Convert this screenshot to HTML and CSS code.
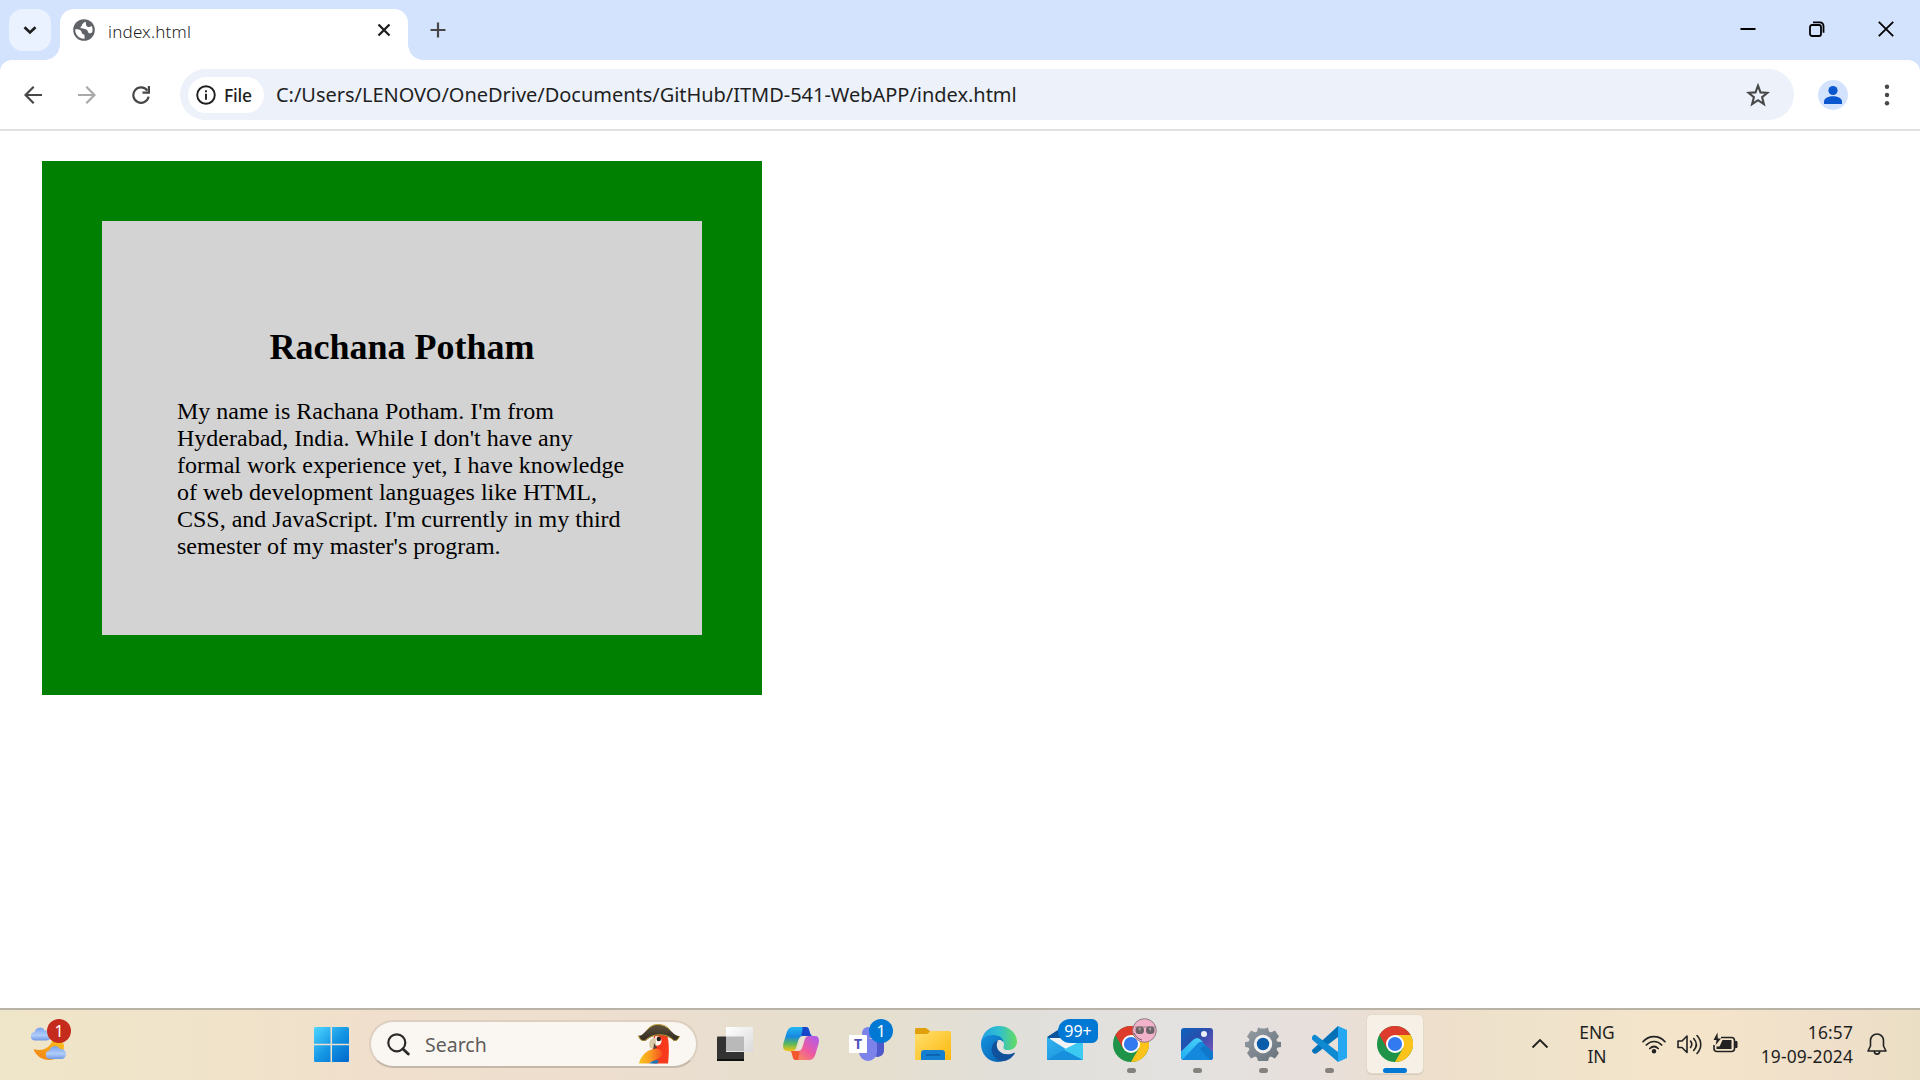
FILE: index.html
```html
<!DOCTYPE html>
<html lang="en">
<head>
<meta charset="utf-8">
<title>index.html</title>
<link rel="stylesheet" href="styles.css">
</head>
<body>
<div class="screen">
  <header class="tabstrip">
    <div class="tab-search"><svg width="42" height="42" viewBox="0 0 42 42"><path d="M15.5 18.2l5.5 5.3 5.5-5.3" fill="none" stroke="#1f1f1f" stroke-width="2.7"/></svg></div>
    <div class="tab">
      <svg class="globe" width="22" height="22" viewBox="0 0 22 22"><circle cx="11" cy="11" r="10.8" fill="#5f6368"/><path d="M2.2 10.3c3.300 .2 4.600 .1 5.700 1.500 1.200 1.400.6 3.100 2.300 3.500 1.300.3 1.500.9 1.400 4.400-5 .4-9.600-3.500-9.400-9.400zM12 2.600c-.8 1.900-3 1.500-3 3.500 0 1.500-1.600 1.400-1.500 2.300.2 1.500 4.300.6 6.200 2.300 1.700 1.500.8 2.900 2.600 3.500 1.200.4 2.200-.2 3-1.100.5-2.300.3-4.500-.6-6-1.900 1.300-4.200 1.200-5.300-.3-.9-1.300.3-2.800-1.400-4.200z" fill="#fff"/></svg>
      <span class="tab-title">index.html</span>
      <svg class="tab-close" width="14" height="14" viewBox="0 0 14 14"><path d="M1.500 1.500l11 11m0-11l-11 11" stroke="#1f1f1f" stroke-width="2.300"/></svg>
    </div>
    <svg class="new-tab" width="16" height="16" viewBox="0 0 16 16"><path d="M8 .5v15M.5 8h15" stroke="#474747" stroke-width="2.200"/></svg>
    <div class="window-buttons">
      <svg width="16" height="16" viewBox="0 0 16 16"><path d="M.5 8h15" stroke="#000" stroke-width="2"/></svg>
      <svg width="16" height="16" viewBox="0 0 16 16" fill="none" stroke="#000" stroke-width="1.800"><rect x="1" y="4" width="11" height="11" rx="2"/><path d="M4 1.300h7a3.500 3.500 0 0 1 3.500 3.500v7"/></svg>
      <svg width="16" height="16" viewBox="0 0 16 16"><path d="M.8.800l14.400 14.400M15.200.800L.8 15.200" stroke="#000" stroke-width="1.800"/></svg>
    </div>
  </header>

  <nav class="toolbar">
    <div class="nav-buttons">
      <svg width="18" height="18" viewBox="0 0 18 18" fill="none" stroke="#474747" stroke-width="2.200"><path d="M18 9H1.800M9.700.8L1.500 9l8.200 8.200"/></svg>
      <svg width="18" height="18" viewBox="0 0 18 18" fill="none" stroke="#a9a9a9" stroke-width="2.200"><path d="M0 9h16.200M8.300.8L16.500 9l-8.200 8.200"/></svg>
      <svg width="18" height="18" viewBox="0 0 18 18"><path d="M16.600 10.600A7.700 7.700 0 1 1 15.300 4.600" fill="none" stroke="#474747" stroke-width="2.200"/><path d="M18 0v7.700h-7.500V5.500h5.300V0z" fill="#474747"/></svg>
    </div>
    <div class="omnibox">
      <div class="chip">
        <svg width="20" height="20" viewBox="0 0 20 20"><circle cx="10" cy="10" r="8.800" fill="none" stroke="#1f1f1f" stroke-width="1.900"/><path d="M10 8.800v6M10 5.300v2" stroke="#1f1f1f" stroke-width="1.900"/></svg>
        <span class="chip-label">File</span>
      </div>
      <span class="url">C:/Users/LENOVO/OneDrive/Documents/GitHub/ITMD-541-WebAPP/index.html</span>
      <svg class="star" width="24" height="24" viewBox="0 0 24 24"><path d="M12 2.700l2.500 6.700 7 .4-5.400 4.400 1.800 6.900-5.900-3.900-5.900 3.900 1.800-6.900L2.500 9.800l7-.4z" fill="none" stroke="#474747" stroke-width="2.100"/></svg>
    </div>
    <svg class="profile" width="30" height="30" viewBox="0 0 30 30"><circle cx="15" cy="15" r="15" fill="#d3e3fd"/><circle cx="15" cy="10.500" r="4.600" fill="#0b57d0"/><path d="M6 24v-2.500c0-3.500 5-5.300 9-5.300s9 1.800 9 5.300V24z" fill="#0b57d0"/></svg>
    <svg class="menu" width="6" height="22" viewBox="0 0 6 22" fill="#474747"><circle cx="3" cy="2.700" r="2.200"/><circle cx="3" cy="11" r="2.200"/><circle cx="3" cy="19.300" r="2.200"/></svg>
  </nav>

  <main class="page">
    <section class="card">
      <h2 class="card-title">Rachana Potham</h2>
      <p class="card-text">My name is Rachana Potham. I'm from Hyderabad, India. While I don't have any formal work experience yet, I have knowledge of web development languages like HTML, CSS, and JavaScript. I'm currently in my third semester of my master's program.</p>
    </section>
  </main>

  <footer class="taskbar">
    <div class="weather">
      <svg width="36" height="36" viewBox="0 0 36 36"><defs><linearGradient id="moon" x1="1" y1="0" x2="0" y2="1"><stop offset="0" stop-color="#fcc419"/><stop offset="1" stop-color="#f07d16"/></linearGradient><linearGradient id="cloud" x1="0" y1="0" x2="0" y2="1"><stop offset="0" stop-color="#7aa2ee"/><stop offset=".6" stop-color="#b0cdf9"/><stop offset="1" stop-color="#7097e4"/></linearGradient></defs><path d="M3.500 23c10 3 17-2 19-9 8 0 11.500 2 11.500 6 0 8-7 14-15 14-7 0-13-4-15.500-11z" fill="url(#moon)"/><path d="M4.500 14.500a4.300 4.300 0 0 1 0-8.500A5.700 5.700 0 0 1 15 4.500a5 5 0 0 1 1.800 10z" fill="url(#cloud)"/><path d="M19.500 33a4.300 4.300 0 0 1 0-8.500A5.700 5.700 0 0 1 30 23a5 5 0 0 1 1.800 10z" fill="url(#cloud)"/></svg>
      <span class="badge badge-red">1</span>
    </div>

    <div class="dock">
      <svg class="start" width="35" height="35" viewBox="0 0 35 35"><defs><linearGradient id="win" x1="0" y1="0" x2="1" y2="1"><stop offset="0" stop-color="#4fd6ff"/><stop offset=".5" stop-color="#1597e5"/><stop offset="1" stop-color="#0067cb"/></linearGradient></defs><path d="M1.500 0H16.500V16.800H0V1.500A1.500 1.500 0 0 1 1.500 0zM18 0H33.500A1.500 1.500 0 0 1 35 1.500V16.800H18zM0 18.200H16.500V35H1.500A1.500 1.500 0 0 1 0 33.500zM18 18.200H35V33.500A1.500 1.500 0 0 1 33.500 35H18z" fill="url(#win)"/></svg>

      <div class="search">
        <svg width="23" height="23" viewBox="0 0 23 23"><circle cx="9.800" cy="9.800" r="8.500" fill="none" stroke="#2a2a2a" stroke-width="2.200"/><path d="M16 16l5.300 5" stroke="#2a2a2a" stroke-width="2.800" stroke-linecap="round"/></svg>
        <span class="search-label">Search</span>
        <svg class="parrot" width="42" height="40" viewBox="0 0 42 40"><defs><linearGradient id="wing" x1="0" y1="0" x2="1" y2="0"><stop offset="0" stop-color="#f5c51d"/><stop offset=".5" stop-color="#fb9a22"/><stop offset="1" stop-color="#f5501f"/></linearGradient><linearGradient id="hat" x1="0" y1="0" x2="0" y2="1"><stop offset="0" stop-color="#5f533c"/><stop offset="1" stop-color="#2e281f"/></linearGradient></defs><path d="M16 11h13c2.500 7 2 20 1 28.500H15c-1-9 0-20 1-28.500z" fill="#f9391b"/><path d="M11 39.500c2-3 7-4 10-3l-1.500 3z" fill="#1779b8"/><path d="M1 39.500C2 34 8 26 15 25c8-1.500 11 3 8 7.500-3 3.500-9 3.500-12 7z" fill="url(#wing)"/><path d="M17 12.500c4-1 6.500 1 6.500 4.500s-4 6-6 4z" fill="#fff4ee"/><path d="M17 14c-5 0-7.500 5-4.500 10.500l5-1.500c1-3 .5-6-.5-9z" fill="#d9caa8"/><path d="M16 19l3 5-3.500 1z" fill="#4b4134"/><circle cx="20.800" cy="15" r="2.200" fill="#231c19"/><path d="M.5 11.500C6 13 9 1 20 .5 32 1 34 12 41.500 12c-1 4-4 6-6 4.500C29 10 15 9 8 16.500 4 18 1 15 .5 11.500z" fill="url(#hat)"/><path d="M.5 11.500c1 4 4 6 7 4.500C15 9 29 9 35.500 16c2 1.500 5-.5 6-4M9 6C13 1 17 .5 20 .5S28 1 32 6" fill="none" stroke="#bd9c33" stroke-width="1"/></svg>
      </div>

      <div class="apps">
        <div class="app"><svg width="36" height="36" viewBox="0 0 36 36"><defs><linearGradient id="tv" x1="0" y1="0" x2="1" y2="1"><stop offset="0" stop-color="#fff"/><stop offset="1" stop-color="#dadada"/></linearGradient></defs><rect y="10.500" width="27" height="24.500" rx="1" fill="#333"/><rect y="33" width="27" height="2" fill="#111"/><path d="M9 1h27v25H9z" fill="url(#tv)"/><path d="M9 10.500h18V25H9z" fill="#b9b9b9"/></svg></div>

        <div class="app"><svg width="36" height="36" viewBox="0 0 36 36"><defs><linearGradient id="co1" x1="0" y1="0" x2="0" y2="1"><stop offset="0" stop-color="#22b8f5"/><stop offset=".4" stop-color="#1787df"/><stop offset=".7" stop-color="#5bb85b"/><stop offset="1" stop-color="#f2c514"/></linearGradient><linearGradient id="co2" x1="1" y1="0" x2="0" y2="1"><stop offset="0" stop-color="#a95cf2"/><stop offset=".5" stop-color="#ee5aa0"/><stop offset="1" stop-color="#ffa33f"/></linearGradient></defs><path d="M10 1h13c3 0 3 3 4 6 1 3 2 3 4 3H20c-4 0-5 5-6 9-1.500 5-2 6-6 6H4c-4 0-4.500-4-3.500-8l3-10C5 3 6.500 1 10 1z" fill="url(#co1)"/><path d="M19 1h4c3 0 3 3 4 6 .7 2.500 1.500 3 4 3H19c-2-2 2-6 0-9z" fill="#1747c8"/><path d="M26 34H13c-3 0-3-3-4-6-.6-2-1-3-3-3h9c4 0 5-5 6-9 1.500-5 2-6 6-6h5c4 0 4.500 4 3.500 8l-3 10c-1.500 4-3 6-6.500 6z" fill="url(#co2)"/><path d="M16 34h-3c-3 0-3-3-4-6l-.8-3H16c2 3-2 6 0 9z" fill="#f3572f"/><path d="M20 10h2c-1.500 2-3 10-5 14h-3c2-4 3-14 6-14z" fill="#e9e3d6"/></svg></div>

        <div class="app"><svg width="36" height="36" viewBox="0 0 36 36"><circle cx="19" cy="7" r="6" fill="#7b83eb"/><path d="M24 12h11v12a6.500 6.500 0 0 1-11 5z" fill="#5059c9"/><path d="M10 13h18v13a9 9 0 0 1-18 0z" fill="#7b83eb"/><rect y="9" width="18" height="18" rx="1" fill="#fff"/><text x="9" y="23" text-anchor="middle" class="teams-letter">T</text></svg><span class="badge badge-blue">1</span></div>

        <div class="app"><svg width="36" height="36" viewBox="0 0 36 36"><defs><linearGradient id="fo" x1="0" y1="0" x2="1" y2="1"><stop offset="0" stop-color="#ffdf70"/><stop offset="1" stop-color="#fcb80c"/></linearGradient></defs><path d="M0 3.500A1.500 1.500 0 0 1 1.500 2H11l4 3v5H0z" fill="#dfa00b"/><path d="M0 8h12l4-3h18.500A1.500 1.500 0 0 1 36 6.500V34H0z" fill="url(#fo)"/><path d="M6 34V27a3 3 0 0 1 3-3h18a3 3 0 0 1 3 3v7z" fill="#147fd1"/><path d="M11 29h14" stroke="#075ba4" stroke-width="1.500"/></svg></div>

        <div class="app"><svg width="36" height="36" viewBox="0 0 36 36"><defs><linearGradient id="e1"><stop offset="0" stop-color="#249ee5"/><stop offset=".5" stop-color="#30bfd0"/><stop offset="1" stop-color="#65dc60"/></linearGradient><linearGradient id="e2" x1="0" y1="0" x2="1" y2="1"><stop offset="0" stop-color="#1693df"/><stop offset="1" stop-color="#075fae"/></linearGradient></defs><path d="M0 17C1 7 8 0 18 0c11 0 18 8 18 15.500 0 6-4.500 8.500-9 8.500-5 0-6.500-1.600-5-4 2-3 0-6.500-5-7C10 12 5 14 0 17z" fill="url(#e1)"/><path d="M0 18C0 12 6 9 12 9c7 0 11 4 10.500 9-.5-3-3-4.500-5-4-6 2-7 13-1 17 2 2 5 3 8 3C12 40 0 31 0 18z" fill="url(#e2)"/><path d="M17.500 14c-9 3-10 15 1.500 21 6 1 11-2 14.500-7 .8-1.200 0-1.500-1-1C25 30.500 13 27 17.500 14z" fill="#10519c"/><path d="M17.500 14c-4 5-1 13 7 14 3 .3 6-.5 8-1.500-3-.5-5-1.500-8-2.500-3-1-2-3-1.500-5 .5-3-3-5.500-5.500-5z" fill="#e2e1de"/></svg></div>

        <div class="app"><svg width="36" height="36" viewBox="0 0 36 36"><defs><linearGradient id="ma" x1="0" y1="0" x2="1" y2="1"><stop offset="0" stop-color="#31b2ee"/><stop offset="1" stop-color="#168edb"/></linearGradient></defs><path d="M0 11L14 2h8l14 9-18 16z" fill="#0b539c"/><path d="M3 12h30v4L18 27 3 15z" fill="#f2f3f6"/><path d="M0 11l36 23H0z" fill="url(#ma)"/><path d="M36 14L16 24l20 10z" fill="#3ccaf3"/><path d="M0 34l17-10 19 10z" fill="#178fdd"/></svg><span class="badge badge-wide">99+</span></div>

        <div class="app"><svg width="36" height="36" viewBox="0 0 36 36"><g id="chrome"><circle cx="18" cy="18" r="18" fill="#1f9347"/><path d="M2.400 9A18 18 0 0 1 33.600 9H18L10.200 22.500z" fill="#dd3b2c"/><path d="M33.600 9A18 18 0 0 1 18 36L25.800 22.500 18 9z" fill="#fcc31a"/><circle cx="18" cy="18" r="9" fill="#fff"/><circle cx="18" cy="18" r="7.100" fill="#327af0"/></g></svg><svg class="avatar" width="25" height="25" viewBox="0 0 25 25"><circle cx="12.500" cy="12.500" r="11.800" fill="#f2b2ca" stroke="#8d7c83"/><path d="M3 9h20" stroke="#8a7a80" stroke-width="1"/><rect x="3.500" y="8.500" width="8.500" height="7.500" rx="3.500" fill="#6d6367"/><rect x="14" y="8.500" width="8.500" height="7.500" rx="3.500" fill="#6d6367"/><path d="M6 10l3-.5-1 4zM16.500 10l3-.5-1 4z" fill="#a89ea2"/><path d="M2 15c2 4 4 6 8 7" fill="none" stroke="#7c5968"/></svg><i class="dot"></i></div>

        <div class="app"><svg width="36" height="36" viewBox="0 0 36 36"><defs><linearGradient id="p1" x1="0" y1="0" x2="1" y2="1"><stop offset="0" stop-color="#0d62bd"/><stop offset=".4" stop-color="#284fad"/><stop offset="1" stop-color="#8c55bc"/></linearGradient><linearGradient id="p2" x1="0" y1="1" x2="1" y2="0"><stop offset="0" stop-color="#22aef0"/><stop offset="1" stop-color="#4ad2f8"/></linearGradient></defs><rect x="2" y="2" width="32" height="32" rx="3" fill="url(#p1)"/><path d="M15 14c2-1.800 4-1.800 6 0l13 12v5a3 3 0 0 1-3 3H5a3 3 0 0 1-2-1z" fill="#1388dc"/><path d="M21 23l5-4 8 7v5a3 3 0 0 1-3 3z" fill="#1077cb"/><path d="M2 25.500L14.500 13.500c2.500-2 5-2 7 0l3 3c-2-1.200-4-1-6 1L3.500 33.500A3 3 0 0 1 2 31z" fill="url(#p2)"/><circle cx="25" cy="8" r="3" fill="#eef1f4"/></svg><i class="dot"></i></div>

        <div class="app"><svg width="36" height="36" viewBox="0 0 36 36"><defs><linearGradient id="ge" x1="0" y1="0" x2="1" y2="1"><stop offset="0" stop-color="#969da4"/><stop offset="1" stop-color="#66717a"/></linearGradient></defs><path d="M13 1.500l-1 4c-.8.800-1.700 1-2.700.5L6 4.500 2 10.500l2.500 3c0 1-1 2-1.700 2.200L0 16v5l3 .5c1 .5 1.500 1.500 1.200 2.500L2 27l4 5.500 3.500-1.800c1-.2 2 0 2.500 1l1 3.300h10l1-3.300c.5-1 1.500-1.200 2.500-1l3.500 1.800 4-5.500-2.200-3c-.3-1 .2-2 1.200-2.500l3-.5v-5l-3-.3c-.8-.2-1.500-1.200-1.500-2.200l2.500-3-4-6-3.300 1.500c-1 .5-1.900.3-2.700-.5l-1-4-3 1h-4z" fill="url(#ge)"/><circle cx="18" cy="18" r="9.200" fill="#f1f1f1"/><circle cx="18" cy="18" r="6.200" fill="#0a5cab"/></svg><i class="dot"></i></div>

        <div class="app"><svg width="36" height="36" viewBox="0 0 36 36"><path d="M1 24L27 0v11L6 27c-1 1-3 1-4-.3-1-1-1-2-1-2.700z" fill="#0371b7"/><path d="M1 12c0-1 0-1.500 1-2.500S4.500 8.500 6 10l21 16v10L1 13.500z" fill="#1089d3"/><path d="M27 0l9 4v28l-9 4z" fill="#25a7f2"/></svg><i class="dot"></i></div>

        <div class="app app-active"><svg width="36" height="36" viewBox="0 0 36 36"><use href="#chrome"/></svg><i class="dot dot-active"></i></div>
      </div>
    </div>

    <div class="tray">
      <svg class="chevron" width="18" height="12" viewBox="0 0 18 12"><path d="M1.500 9.500L9 2l7.500 7.500" fill="none" stroke="#222" stroke-width="1.900"/></svg>
      <div class="lang"><span>ENG</span><span>IN</span></div>
      <div class="status">
        <svg width="24" height="24" viewBox="0 0 24 24" fill="none" stroke="#222" stroke-width="1.700" stroke-linecap="round"><path d="M1 9.700c6-6.800 16-6.800 22 0M4.300 13c4.500-4.700 11-4.700 15.400 0M7.800 16.500c2.600-2.500 5.800-2.500 8.400 0"/><circle cx="12" cy="19.300" r="1.400" fill="#222"/></svg>
        <svg width="25" height="24" viewBox="0 0 25 24" fill="none" stroke="#222" stroke-width="1.600" stroke-linecap="round" stroke-linejoin="round"><path d="M1 9v6.500h4l5 5V4l-5 5zM13.500 9c1.600 2 1.600 4.500 0 6.500M16.700 6.500c3.300 3.700 3.300 8.300 0 12M20 3.500c5 5.500 5 12.500 0 18"/></svg>
        <svg width="25" height="24" viewBox="0 0 25 24"><path d="M8 5.500h10.500a3 3 0 0 1 3 3v8a3 3 0 0 1-3 3H4a3 3 0 0 1-3-3V13" fill="none" stroke="#222" stroke-width="1.600"/><path d="M9.500 8h9v9h-15v-2.500h3z" fill="#222"/><path d="M22.300 9.500H24v6h-1.700z" fill="#222" stroke="#222"/><path d="M4.500.500L.500 8h3l-.8 5L8 6.500H4.800z" fill="#222"/></svg>
      </div>
      <div class="clock"><span class="time">16:57</span><span class="date">19-09-2024</span></div>
      <svg class="bell" width="20" height="23" viewBox="0 0 20 23" fill="none" stroke="#222" stroke-width="1.600" stroke-linejoin="round"><path d="M10 1a6.500 6.500 0 0 0-6.500 6.500V13L1 18h18l-2.500-5V7.500A6.500 6.500 0 0 0 10 1zM7.200 18.500c.6 3.500 5 3.500 5.600 0"/></svg>
    </div>
  </footer>
</div>
</body>
</html>
```
FILE: styles.css
```css
* { box-sizing: border-box; }
body { margin: 0; overflow: hidden; }
svg { display: block; flex: none; }

.screen {
  width: 1920px;
  height: 1080px;
  display: flex;
  flex-direction: column;
  background: #d3e3fd;
  font-family: "Noto Sans", "Open Sans", sans-serif;
  color: #1f1f1f;
}

/* Tab strip */
.tabstrip {
  height: 60px;
  display: flex;
  padding: 9px 26px 0 9px;
}
.tab-search {
  width: 42px;
  height: 42px;
  border-radius: 14px;
  background: #ebf2ff;
}
.tab {
  position: relative;
  width: 348px;
  margin-left: 9px;
  padding: 0 17px 9px 13px;
  display: flex;
  align-items: center;
  background: #fff;
  border-radius: 14px 14px 0 0;
}
.tab::before,
.tab::after {
  content: "";
  position: absolute;
  bottom: 0;
  width: 15px;
  height: 15px;
}
.tab::before { left: -15px; background: radial-gradient(circle at 0 0, transparent 14.5px, #fff 15px); }
.tab::after { right: -15px; background: radial-gradient(circle at 100% 0, transparent 14.5px, #fff 15px); }
.tab-title { margin: 2px 0 0 13px; font-size: 17px; font-weight: 350; letter-spacing: .2px; white-space: nowrap; }
.tab-close { margin-left: auto; }
.new-tab { margin: 13px 0 0 22px; }
.window-buttons { display: flex; gap: 53px; margin: 12px 0 0 auto; }

/* Toolbar */
.toolbar {
  height: 71px;
  display: flex;
  align-items: center;
  padding: 0 30px 0 24px;
  background: #fff;
  border-bottom: 2px solid #e1e1e1;
  border-radius: 12px 12px 0 0;
}
.nav-buttons { display: flex; gap: 36px; }
.omnibox {
  width: 1614px;
  height: 51px;
  margin-left: 30px;
  padding: 0 24px 0 8px;
  display: flex;
  align-items: center;
  background: #ecf1fa;
  border-radius: 26px;
}
.chip {
  width: 76px;
  height: 36px;
  padding-left: 8px;
  display: flex;
  align-items: center;
  gap: 8px;
  background: #fff;
  border-radius: 18px;
}
.chip-label { font-size: 17.5px; font-weight: 500; letter-spacing: -.2px; }
.url { margin-left: 12px; font-size: 20px; letter-spacing: -.03px; white-space: nowrap; }
.star { margin-left: auto; }
.profile { margin-left: 24px; }
.menu { margin-left: auto; }

/* Document shown in the browser */
.page {
  flex: 1;
  padding: 30px 42px;
  background: #fff;
  font-family: "Liberation Serif", "Times New Roman", serif;
  color: #000;
}
.card {
  width: 720px;
  height: 534px;
  padding: 75px;
  border: 60px solid green;
  background: lightgray;
}
.card-title { margin: 30px 0; font-size: 36px; line-height: 42px; text-align: center; }
.card-text { margin: 0; font-size: 24px; line-height: 27px; }

/* Taskbar */
.taskbar {
  height: 72px;
  display: flex;
  align-items: center;
  padding: 0 32px 2px 30px;
  border-top: 2px solid #b9b2a6;
  background: linear-gradient(90deg, #efe5c8 0, #f0e3ca 250px, #f0dfcc 370px, #ecdecf 660px, #e9decf 700px, #e6dfcd 860px, #e1dfda 1010px, #e3e2e0 1180px, #e7dfdc 1310px, #eddfcb 1430px, #efe2cb 1520px, #f4e5ca 1680px, #efdfca 1840px, #eadfc4 1920px);
}
.weather { position: relative; width: 36px; }
.badge {
  position: absolute;
  left: 17px;
  width: 24px;
  height: 24px;
  border-radius: 12px;
  color: #fff;
  font-size: 16px;
  line-height: 24px;
  text-align: center;
}
.badge-red { background: #c42b1c; top: -7px; }
.badge-blue { background: #0078d4; left: 20px; }
.badge-wide { background: #0078d4; left: 11px; width: 40px; border-radius: 12px 6px 6px 12px; }

.dock { display: flex; align-items: center; margin-left: 248px; }
.search {
  width: 329px;
  height: 48px;
  margin-left: 20px;
  padding: 0 16px;
  display: flex;
  align-items: center;
  background: #faf6f1;
  border: 2px solid #ddd0c1;
  border-bottom-color: #c5b9aa;
  border-radius: 24px;
}
.search-label { margin-left: 15px; font-size: 19.5px; color: #5f5d5b; }
.parrot { margin-left: auto; }

.apps { display: flex; gap: 10px; margin-left: 9px; }
.app {
  position: relative;
  width: 56px;
  height: 58px;
  padding: 11px 10px;
}
.app .badge { top: 4px; left: 30px; }
.app .badge-wide { left: 21px; }
.avatar { position: absolute; left: 29px; top: 3px; }
.app-active { background: #f6f0e7; border-radius: 5px; box-shadow: 0 0 0 1px #e5dac9, 0 1px 0 1px #d8cdbd; }
.dot {
  position: absolute;
  left: 24px;
  bottom: 0;
  width: 9px;
  height: 5px;
  border-radius: 3px;
  background: #85827e;
}
.dot-active { left: 16px; width: 24px; background: #0078d4; }
.teams-letter { font: 700 14px "Noto Sans", sans-serif; fill: #4b53bc; }

.tray { display: flex; align-items: center; margin-left: auto; font-size: 17.4px; line-height: 24px; }
.lang { width: 40px; margin-left: 28px; display: flex; flex-direction: column; align-items: center; }
.status { display: flex; gap: 11px; margin-left: 25px; }
.clock { width: 96px; margin-left: 19px; display: flex; flex-direction: column; align-items: flex-end; white-space: nowrap; }
.time, .date { letter-spacing: .15px; }
.bell { margin-left: 14px; margin-right: 1px; }
```
